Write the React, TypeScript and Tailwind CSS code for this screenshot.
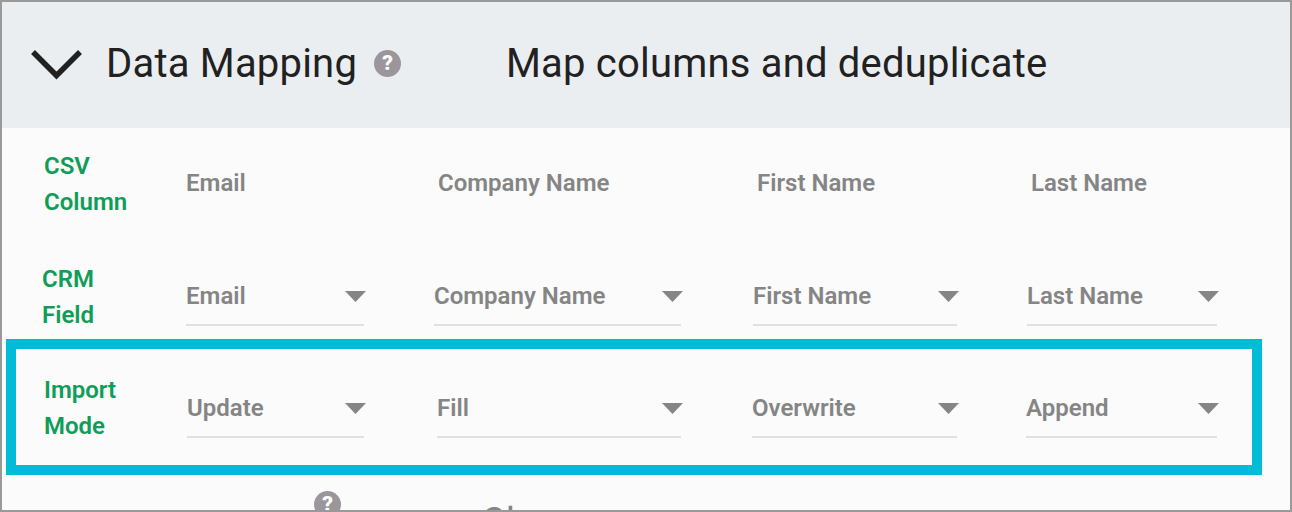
const crmColumns = [
  { value: "Email", className: "ml-[43px] w-[178px]" },
  { value: "Company Name", className: "ml-[70px] w-[247px]" },
  { value: "First Name", className: "ml-[72px] w-[204px]" },
  { value: "Last Name", className: "ml-[70px] w-[190px]" },
];

const modeColumns = [
  { value: "Update", className: "ml-[42px] w-[177px]" },
  { value: "Fill", className: "ml-[73px] w-[244px]" },
  { value: "Overwrite", className: "ml-[71px] w-[205px]" },
  { value: "Append", className: "ml-[69px] w-[191px]" },
];

const csvColumns = [
  { value: "Email", className: "ml-[41px] w-[252px]" },
  { value: "Company Name", className: "w-[319px]" },
  { value: "First Name", className: "w-[274px]" },
  { value: "Last Name", className: "" },
];

function HelpIcon() {
  return (
    <span className="flex h-[27px] w-[27px] shrink-0 items-center justify-center rounded-full bg-[#9a969b] text-[21px] font-black text-white">
      ?
    </span>
  );
}

function Select({ value, className }: { value: string; className: string }) {
  return (
    <div className={`flex h-[50px] shrink-0 items-center justify-between border-b-2 border-[#e0e0e0] pb-[8px] ${className}`}>
      <span>{value}</span>
      <svg width="21" height="11" viewBox="0 0 21 11" className="-mr-[2px]">
        <path d="M0 0h21l-10.500 11z" fill="#858585" />
      </svg>
    </div>
  );
}

function Label({ lines }: { lines: string[] }) {
  return (
    <div className="w-[101px] shrink-0 leading-[36px] font-semibold text-[#0f9d58]">
      {lines.map((line) => (
        <div key={line}>{line}</div>
      ))}
    </div>
  );
}

export default function App() {
  return (
    <div className="h-[512px] w-[1292px] overflow-hidden border-2 border-[#999999] bg-[#fbfbfb] font-['Roboto',sans-serif]">
      <header className="flex h-[126px] items-center bg-[#ebeef1] pl-[28px] text-[#212121]">
        <svg width="53" height="31" viewBox="0 0 53 31" className="mb-[1px] shrink-0">
          <path d="M3 3l23.500 23.500L50 3" fill="none" stroke="#212121" strokeWidth="5.500" />
        </svg>
        <h1 className="mb-[2px] ml-[23px] w-[254px] text-[40px] tracking-[0.2px]">Data Mapping</h1>
        <span className="mb-[3px] ml-[14px]">
          <HelpIcon />
        </span>
        <h2 className="mb-[2px] ml-[105px] text-[40px] tracking-[0.2px]">Map columns and deduplicate</h2>
      </header>

      <div className="text-[24px] font-semibold text-[#858585]">
        <div className="flex h-[112px] items-center pl-[42px]">
          <Label lines={["CSV", "Column"]} />
          {csvColumns.map(({ value, className }) => (
            <span key={value} className={`mb-[2px] ${className}`}>
              {value}
            </span>
          ))}
        </div>

        <div className="flex h-[99px] items-start pt-[21px] pl-[40px]">
          <Label lines={["CRM", "Field"]} />
          <div className="mt-[15px] flex">
            {crmColumns.map(({ value, className }) => (
              <Select key={value} value={value} className={className} />
            ))}
          </div>
        </div>

        <div className="ml-[4px] flex h-[136px] w-[1256px] items-start border-[10px] border-[#00bcd8] pt-[23px] pl-[28px]">
          <Label lines={["Import", "Mode"]} />
          <div className="mt-[16px] flex">
            {modeColumns.map(({ value, className }) => (
              <Select key={value} value={value} className={className} />
            ))}
          </div>
        </div>
      </div>

      <div className="mt-[16px] ml-[312px] flex h-[40px] items-start">
        <HelpIcon />
        <span className="mt-[11px] ml-[140px] text-[38px] leading-[40px] text-[#858585]">Cl</span>
      </div>
    </div>
  );
}
